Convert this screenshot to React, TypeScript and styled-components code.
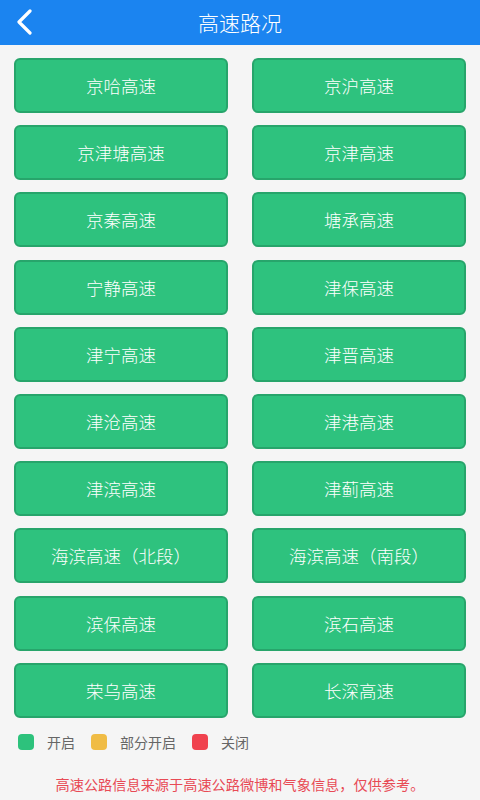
import { FC } from 'react';
import styled, { createGlobalStyle } from 'styled-components';

const roads = [
	'京哈高速',
	'京沪高速',
	'京津塘高速',
	'京津高速',
	'京秦高速',
	'塘承高速',
	'宁静高速',
	'津保高速',
	'津宁高速',
	'津晋高速',
	'津沧高速',
	'津港高速',
	'津滨高速',
	'津蓟高速',
	'海滨高速（北段）',
	'海滨高速（南段）',
	'滨保高速',
	'滨石高速',
	'荣乌高速',
	'长深高速',
];

const legend = [
	{ label: '开启', color: '#2dc27c' },
	{ label: '部分开启', color: '#f0bc45' },
	{ label: '关闭', color: '#f0424e' },
];

const GlobalStyle = createGlobalStyle`
	body {
		margin: 0;
		background: #f5f5f5;
		font-family: "Noto Sans CJK SC", "Noto Sans", sans-serif;
	}
`;

const App: FC = () => {
	return (
		<Page>
			<GlobalStyle />
			<Header>
				<BackButton>
					<svg width='20' height='26' viewBox='0 0 20 26'>
						<path
							d='M15 2 L4 13 L15 24'
							fill='none'
							stroke='#fff'
							strokeWidth='3.2'
							strokeLinecap='round'
							strokeLinejoin='round'
						/>
					</svg>
				</BackButton>
				<Title>高速路况</Title>
			</Header>
			<Grid>
				{roads.map((name) => (
					<RoadButton key={name}>{name}</RoadButton>
				))}
			</Grid>
			<Legend>
				{legend.map((item) => (
					<LegendItem key={item.label}>
						<Swatch $color={item.color} />
						<span>{item.label}</span>
					</LegendItem>
				))}
			</Legend>
			<Note>高速公路信息来源于高速公路微博和气象信息，仅供参考。</Note>
		</Page>
	);
};

const Page = styled.div`
	width: 480px;
	height: 800px;
	background: #f5f5f5;
	display: flex;
	flex-direction: column;
	overflow: hidden;
`;

const Header = styled.div`
	height: 45px;
	background: #1b84f0;
	display: flex;
	align-items: center;
	justify-content: center;
	position: relative;
	flex-shrink: 0;
`;

const BackButton = styled.div`
	position: absolute;
	left: 15px;
	top: 9px;
	display: flex;
`;

const Title = styled.div`
	color: #fff;
	font-size: 21px;
	font-weight: 300;
	line-height: 1;
`;

const Grid = styled.div`
	display: grid;
	grid-template-columns: 214px 214px;
	column-gap: 24px;
	row-gap: 12.2px;
	padding: 13px 14px 0;
`;

const RoadButton = styled.div`
	height: 55px;
	box-sizing: border-box;
	background: #2ec27e;
	border: 2px solid #27a56b;
	border-radius: 6px;
	color: #fff;
	font-size: 17.5px;
	font-weight: 300;
	display: flex;
	align-items: center;
	justify-content: center;
	user-select: none;
`;

const Legend = styled.div`
	display: flex;
	align-items: center;
	gap: 16px;
	padding: 14px 18px 0;
`;

const LegendItem = styled.div`
	display: flex;
	align-items: center;
	gap: 13px;
	color: #666;
	font-size: 14px;
`;

const Swatch = styled.div<{ $color: string }>`
	width: 16px;
	height: 16px;
	border-radius: 4px;
	background: ${(p) => p.$color};
`;

const Note = styled.div`
	margin-top: 22px;
	text-align: center;
	color: #e84a55;
	font-size: 14.2px;
`;

export default App;
